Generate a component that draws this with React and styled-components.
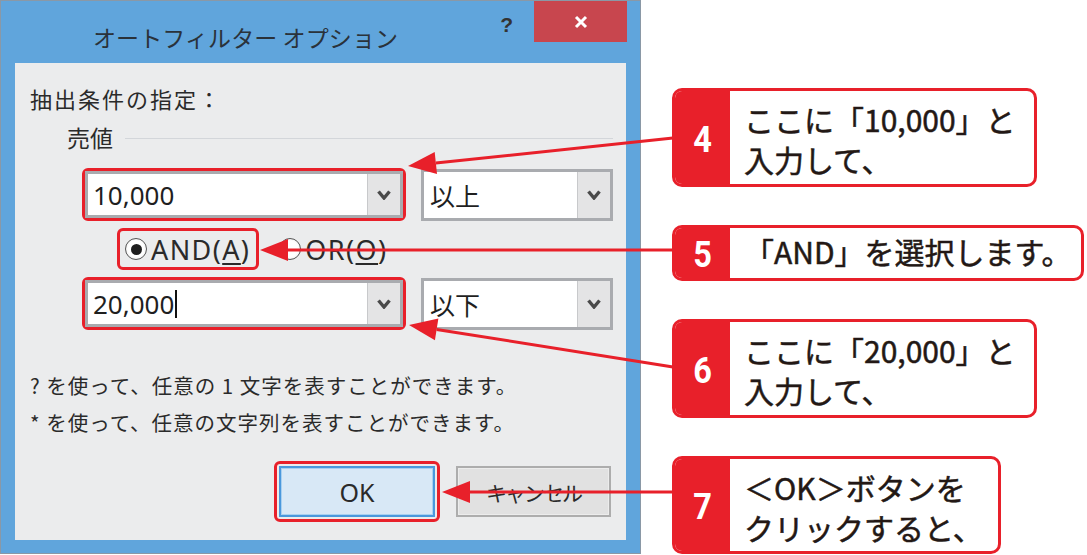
import React from 'react';
import styled, { createGlobalStyle } from 'styled-components';

const GlobalStyle = createGlobalStyle`
  html, body {
    margin: 0;
    padding: 0;
    background: #fff;
  }
  body {
    font-family: "Noto Sans CJK JP", "Noto Sans", sans-serif;
  }
`;

const RED = '#e8202a';

const Page = styled.div`
  position: relative;
  width: 1087px;
  height: 555px;
  display: flex;
  align-items: flex-start;
  overflow: hidden;
`;

/* ---------- dialog ---------- */

const Dialog = styled.div`
  width: 641px;
  height: 554px;
  box-sizing: border-box;
  border: 1px solid #8a98a6;
  background: #60a5dc;
  display: flex;
  flex-direction: column;
`;

const TitleBar = styled.div`
  height: 62px;
  display: flex;
  align-items: flex-start;
`;

const Title = styled.div`
  flex: 1;
  padding: 21px 0 0 92px;
  font-size: 23px;
  line-height: 30px;
  color: #2a323a;
  letter-spacing: 0.1px;
`;

const Help = styled.div`
  margin: 9px 21px 0 0;
  font-family: "Liberation Sans", sans-serif;
  font-weight: 700;
  font-size: 21px;
  line-height: 30px;
  color: #333;
`;

const CloseButton = styled.div`
  width: 93px;
  height: 41px;
  margin-right: 13px;
  background: #c8464e;
  display: flex;
  align-items: center;
  justify-content: center;
`;

const Client = styled.div`
  margin: 0 14px 0 14px;
  height: 477px;
  box-sizing: border-box;
  padding: 0 13px 0 15px;
  background: #ebeced;
  display: flex;
  flex-direction: column;
  color: #2a2a2a;
`;

const Label = styled.div`
  margin-top: 21px;
  font-size: 22px;
  line-height: 28px;
  letter-spacing: 2px;
`;

const GroupHeader = styled.div`
  margin: 11px 0 0 37px;
  display: flex;
  align-items: center;
  gap: 12px;
  font-size: 23px;
  line-height: 28px;
`;

const Rule = styled.div`
  flex: 1;
  height: 1px;
  margin-top: 2px;
  background: #d3d6da;
`;

const ConditionRow = styled.div`
  margin: ${p => p.$top}px 0 0 52px;
  display: flex;
  align-items: center;
  gap: 15px;
`;

const Highlight = styled.div`
  border: 3px solid ${RED};
  border-radius: 6px;
  padding: ${p => p.$pad || 0}px;
  display: flex;
`;

const Combo = styled.div`
  width: ${p => p.$width}px;
  height: ${p => p.$height}px;
  box-sizing: border-box;
  border: 3px solid #a9abaf;
  background: #fff;
  display: flex;
`;

const Field = styled.div`
  flex: 1;
  display: flex;
  align-items: center;
  padding-left: ${p => p.$indent}px;
  font-family: "Noto Sans", "Noto Sans CJK JP", sans-serif;
  font-size: 26px;
  color: #1f1f1f;
`;

const FieldJp = styled(Field)`
  font-family: "Noto Sans CJK JP", sans-serif;
  font-size: 25px;
`;

const Caret = styled.span`
  display: inline-block;
  width: 2px;
  height: 28px;
  margin-left: 1px;
  background: #111;
`;

const DropButton = styled.div`
  width: 33px;
  box-sizing: border-box;
  border-left: 1px solid #c8c9cb;
  background: #e4e4e5;
  display: flex;
  align-items: center;
  justify-content: center;
`;

const RadioRow = styled.div`
  margin: 7px 0 0 87px;
  display: flex;
  align-items: center;
  gap: 15px;
`;

const RadioLabel = styled.div`
  height: 36px;
  display: flex;
  align-items: center;
  gap: 4px;
  padding: 0 6px 0 5px;
  font-family: "Noto Sans", sans-serif;
  font-size: 27px;
  letter-spacing: 1.4px;
  color: #2a2a2a;
`;

const RadioCircle = styled.span`
  width: 22px;
  height: 22px;
  box-sizing: border-box;
  border-radius: 50%;
  border: 1px solid #555;
  background: radial-gradient(circle, #fff 55%, #e0e0e0 100%);
  display: flex;
  align-items: center;
  justify-content: center;
  &::after {
    content: '';
    width: 11px;
    height: 11px;
    border-radius: 50%;
    background: ${p => (p.$checked ? '#1e1e1e' : 'transparent')};
  }
`;

const Key = styled.span`
  text-decoration: underline;
  text-decoration-thickness: 2px;
  text-underline-offset: 3px;
`;

const Hint = styled.div`
  margin-top: ${p => p.$top || 0}px;
  font-size: 20.5px;
  line-height: 37px;
  letter-spacing: 1px;
`;

const ButtonRow = styled.div`
  margin-top: 20px;
  display: flex;
  justify-content: flex-end;
  align-items: center;
  gap: 16px;
  padding-right: 2px;
`;

const Button = styled.div`
  width: ${p => p.$width}px;
  height: 51px;
  box-sizing: border-box;
  display: flex;
  align-items: center;
  justify-content: center;
  font-family: "Noto Sans", "Noto Sans CJK JP", sans-serif;
  font-size: ${p => (p.$primary ? 25 : 21)}px;
  letter-spacing: ${p => (p.$primary ? 0 : -2)}px;
  color: #2a2a2a;
  border: 2px solid ${p => (p.$primary ? '#4a98dc' : '#adadad')};
  background: ${p => (p.$primary ? '#d8e8f6' : '#e1e1e1')};
  box-shadow: inset 0 0 0 1px ${p => (p.$primary ? '#a9d0f0' : '#ececec')};
`;

/* ---------- callouts ---------- */

const Callouts = styled.div`
  margin-left: 31px;
  padding-top: 88px;
  display: flex;
  flex-direction: column;
  gap: 38px;
`;

const Callout = styled.div`
  width: ${p => p.$width}px;
  height: ${p => p.$height}px;
  box-sizing: border-box;
  border: 3px solid ${RED};
  border-radius: 10px;
  background: #fff;
  display: flex;
  overflow: hidden;
`;

const StepNumber = styled.div`
  width: 55px;
  background: ${RED};
  display: flex;
  align-items: center;
  justify-content: center;
  font-family: Roboto, "Liberation Sans", sans-serif;
  font-weight: 700;
  font-size: 37px;
  color: #fff;
  padding-top: 3px;
  span {
    display: inline-block;
    transform: scaleX(0.88);
  }
`;

const CalloutText = styled.div`
  padding: ${p => (p.$single ? '0 0 4px 14px' : '3px 0 0 14px')};
  display: flex;
  flex-direction: column;
  justify-content: center;
  font-family: "Noto Sans CJK JP", sans-serif;
  font-weight: 400;
  font-size: 30px;
  line-height: 40px;
  color: #231815;
  -webkit-text-stroke: 0.5px #231815;
  white-space: nowrap;
`;

const Overlay = styled.svg`
  position: absolute;
  left: 0;
  top: 0;
  pointer-events: none;
`;

const ARROWS = [
  { from: [673, 138], to: [408, 166] },
  { from: [673, 250], to: [260, 250] },
  { from: [673, 367], to: [409, 325] },
  { from: [673, 492], to: [442, 492] },
];

function Arrow({ from, to }) {
  const dx = to[0] - from[0];
  const dy = to[1] - from[1];
  const len = Math.hypot(dx, dy);
  const ux = dx / len;
  const uy = dy / len;
  const bx = to[0] - ux * 28;
  const by = to[1] - uy * 28;
  const px = -uy * 11;
  const py = ux * 11;
  return (
    <g>
      <line x1={from[0]} y1={from[1]} x2={bx} y2={by} stroke={RED} strokeWidth="3" />
      <polygon
        points={`${to[0]},${to[1]} ${bx + px},${by + py} ${bx - px},${by - py}`}
        fill={RED}
      />
    </g>
  );
}

const Chevron = () => (
  <svg width="14" height="10" viewBox="0 0 14 10">
    <path d="M1.5 1.5 L7 8 L12.5 1.5" fill="none" stroke="#4a4a4a" strokeWidth="3.4" />
  </svg>
);

const CloseIcon = () => (
  <svg width="14" height="14" viewBox="0 0 14 14">
    <path d="M2 2 L12 12 M12 2 L2 12" stroke="#fff" strokeWidth="3" />
  </svg>
);

function Condition({ top, value, operator, caret }) {
  return (
    <ConditionRow $top={top}>
      <Highlight>
        <Combo $width={318} $height={47}>
          <Field $indent={5}>
            {value}
            {caret && <Caret />}
          </Field>
          <DropButton>
            <Chevron />
          </DropButton>
        </Combo>
      </Highlight>
      <Combo $width={192} $height={52}>
        <FieldJp $indent={6}>{operator}</FieldJp>
        <DropButton>
          <Chevron />
        </DropButton>
      </Combo>
    </ConditionRow>
  );
}

const STEPS = [
  { n: 4, width: 365, height: 99, lines: ['ここに「10,000」と', '入力して、'] },
  { n: 5, width: 412, height: 56, lines: ['「AND」を選択します。'] },
  { n: 6, width: 365, height: 99, lines: ['ここに「20,000」と', '入力して、'] },
  { n: 7, width: 329, height: 98, lines: ['＜OK＞ボタンを', 'クリックすると、'] },
];

export default function App() {
  return (
    <Page>
      <GlobalStyle />
      <Dialog>
        <TitleBar>
          <Title>オートフィルター オプション</Title>
          <Help>?</Help>
          <CloseButton>
            <CloseIcon />
          </CloseButton>
        </TitleBar>
        <Client>
          <Label>抽出条件の指定：</Label>
          <GroupHeader>
            <span>売値</span>
            <Rule />
          </GroupHeader>
          <Condition top={17} value="10,000" operator="以上" />
          <RadioRow>
            <Highlight>
              <RadioLabel>
                <RadioCircle $checked />
                <span>
                  AND(<Key>A</Key>)
                </span>
              </RadioLabel>
            </Highlight>
            <RadioLabel>
              <RadioCircle />
              <span>
                OR(<Key>O</Key>)
              </span>
            </RadioLabel>
          </RadioRow>
          <Condition top={7} value="20,000" operator="以下" caret />
          <Hint $top={37}>? を使って、任意の 1 文字を表すことができます。</Hint>
          <Hint>* を使って、任意の文字列を表すことができます。</Hint>
          <ButtonRow>
            <Highlight $pad={2}>
              <Button $primary $width={156}>OK</Button>
            </Highlight>
            <Button $width={155}>キャンセル</Button>
          </ButtonRow>
        </Client>
      </Dialog>

      <Callouts>
        {STEPS.map(step => (
          <Callout key={step.n} $width={step.width} $height={step.height}>
            <StepNumber>
              <span>{step.n}</span>
            </StepNumber>
            <CalloutText $single={step.lines.length === 1}>
              {step.lines.map(line => (
                <span key={line}>{line}</span>
              ))}
            </CalloutText>
          </Callout>
        ))}
      </Callouts>

      <Overlay width="1087" height="555" viewBox="0 0 1087 555">
        {ARROWS.map((a, i) => (
          <Arrow key={i} from={a.from} to={a.to} />
        ))}
      </Overlay>
    </Page>
  );
}
